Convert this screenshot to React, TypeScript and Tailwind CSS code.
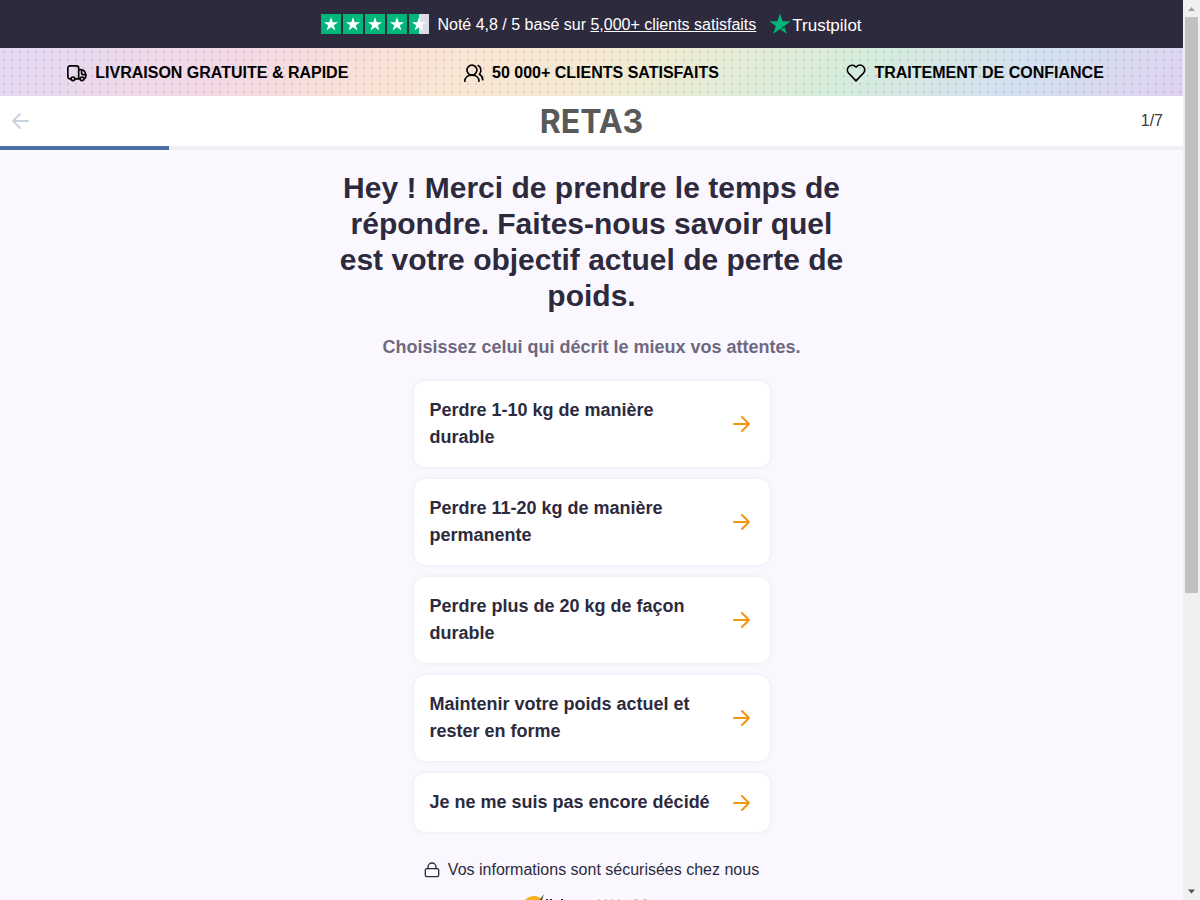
import React from 'react';

const STAR = 'M12 1.5l2.6 7.7h8.1l-6.5 4.8 2.5 7.8L12 17l-6.7 4.8L7.8 14 1.3 9.2h8.1z';

const goals = [
  'Perdre 1-10 kg de manière durable',
  'Perdre 11-20 kg de manière permanente',
  'Perdre plus de 20 kg de façon durable',
  'Maintenir votre poids actuel et rester en forme',
  'Je ne me suis pas encore décidé',
];

function RatingStar({ half = false }: { half?: boolean }) {
  return (
    <span className={half ? 'flex size-5 items-center justify-center bg-linear-to-r from-[#00b67a] from-50% to-[#dcdce6] to-50%' : 'flex size-5 items-center justify-center bg-[#00b67a]'}>
      <svg viewBox="0 0 24 24" className="size-4 fill-white" aria-hidden="true">
        <path d={STAR} />
      </svg>
    </span>
  );
}

function LineIcon({ className, children }: { className: string; children: React.ReactNode }) {
  return (
    <svg viewBox="0 0 24 24" className={className} fill="none" stroke="currentColor" strokeWidth="2" strokeLinecap="round" strokeLinejoin="round" aria-hidden="true">
      {children}
    </svg>
  );
}

function TopBar() {
  return (
    <div className="flex h-12 items-center justify-center bg-[#2d2a3e] text-base text-white">
      <div className="mr-2 flex gap-0.5" role="img" aria-label="4,8 / 5">
        <RatingStar />
        <RatingStar />
        <RatingStar />
        <RatingStar />
        <RatingStar half />
      </div>
      <p className="pt-0.5">
        Noté 4,8 / 5 basé sur <a href="#avis" className="underline">5,000+ clients satisfaits</a>
      </p>
      <a href="#trustpilot" className="ml-3 flex items-center">
        <svg viewBox="0 0 24 24" className="size-6" aria-hidden="true">
          <path d={STAR} fill="#00b67a" />
          <path d="M16.8 16l-.6-2L12 17z" fill="#005128" />
        </svg>
        <span className="pt-1 text-[17px] leading-6">Trustpilot</span>
      </a>
    </div>
  );
}

function Benefits() {
  return (
    <div className="bg-[linear-gradient(135deg,#e4d9f5_0%,#f3d8e4_20%,#fae3d5_34%,#f5ead1_50%,#d6edda_70%,#d2e0f1_86%,#e0d2ef_100%)]">
      <ul className="grid h-12 grid-cols-3 items-center bg-[radial-gradient(circle,rgba(60,50,90,0.15)_1px,transparent_1.5px)] bg-size-[8px_8px] px-4 pt-0.5 text-base font-bold text-black">
        <li className="flex items-center justify-center gap-2">
          <LineIcon className="size-5">
            <path d="M4 19a2.500 2.500 0 0 1-3-2.500V6a2.500 2.500 0 0 1 2.500-2.500h8A2.500 2.500 0 0 1 14 6v13H9.500M14 8h2.500a6 6 0 0 1 6 6v2.500a2.500 2.500 0 0 1-2 2.500M14 19h1.500" />
            <circle cx="7.200" cy="19" r="2.200" />
            <circle cx="18" cy="19" r="2.200" />
            <path d="M17.500 9v3a2 2 0 0 0 2 2h3" />
          </LineIcon>
          LIVRAISON GRATUITE &amp; RAPIDE
        </li>
        <li className="flex items-center justify-center gap-2">
          <LineIcon className="size-5">
            <circle cx="9.500" cy="8.500" r="6" />
            <path d="M1 22c0-4.500 3.500-7.500 8.500-7.500s8.500 3 8.500 7.500M17 3c3.500 1.500 4.500 7 1.500 10.500 2.500 1.500 4 3.500 4 6.500" />
          </LineIcon>
          50 000+ CLIENTS SATISFAITS
        </li>
        <li className="flex items-center justify-center gap-2">
          <LineIcon className="size-5">
            <path d="M20.800 4.200a5.700 5.700 0 0 0-8 0L12 5l-.8-.8a5.700 5.700 0 0 0-8 8.100L12 21.500l8.800-9.200a5.700 5.700 0 0 0 0-8.100z" />
          </LineIcon>
          TRAITEMENT DE CONFIANCE
        </li>
      </ul>
    </div>
  );
}

function StepHeader() {
  return (
    <header>
      <div className="grid h-[50px] grid-cols-3 items-center bg-white px-2">
        <button type="button" aria-label="Retour" className="justify-self-start text-[#c9d3df]">
          <LineIcon className="size-6">
            <path d="M20 12H5M12 19l-7-7 7-7" />
          </LineIcon>
        </button>
        <span className="justify-self-center pt-0.5 font-['Inter',sans-serif] text-[32px] leading-9 font-bold text-[#595959]">RETA3</span>
        <span className="justify-self-end pr-3 text-base text-[#3a3a48]">1/7</span>
      </div>
      <div className="h-1 bg-[#edf0f5]">
        <div className="h-1 w-1/7 bg-[#4a6fa5]" />
      </div>
    </header>
  );
}

function GoalOption({ label }: { label: string }) {
  return (
    <button type="button" className="flex w-full items-center justify-between rounded-xl bg-white py-4 pr-[17px] pl-4 text-left text-lg leading-[27px] font-bold text-[#2d2a3e] shadow-[0_0_4px_rgba(45,42,62,0.08)]">
      <span className="max-w-[284px]">{label}</span>
      <LineIcon className="size-6 shrink-0 text-[#f0960f]">
        <path d="M5 12h15M13 19l7-7-7-7" />
      </LineIcon>
    </button>
  );
}

function ScrollRail() {
  return (
    <div className="flex w-[17px] shrink-0 flex-col items-center bg-[#f0f0f0]" aria-hidden="true">
      <svg viewBox="0 0 17 17" className="size-[17px] shrink-0"><path d="M5 11l3.500-4 3.500 4z" fill="#a0a0a0" /></svg>
      <div className="h-[64%] w-[13px] bg-[#c1c1c1]" />
      <svg viewBox="0 0 17 17" className="mt-auto size-[17px] shrink-0"><path d="M5 6.500l3.500 4 3.500-4z" fill="#505050" /></svg>
    </div>
  );
}

export default function App() {
  return (
    <div className="flex h-screen overflow-hidden bg-[#faf8fe] font-['Liberation_Sans',Arial,sans-serif]">
      <div className="min-w-0 grow overflow-hidden">
        <TopBar />
        <Benefits />
        <StepHeader />
        <main className="flex flex-col items-center px-4 pt-5">
          <h1 className="max-w-[512px] text-center text-3xl leading-9 font-bold text-[#2d2a3e]">
            Hey ! Merci de prendre le temps de répondre. Faites-nous savoir quel est votre objectif actuel de perte de poids.
          </h1>
          <p className="mt-5 text-center text-lg leading-[27px] font-bold text-[#6f6781]">Choisissez celui qui décrit le mieux vos attentes.</p>
          <div className="mt-5 flex w-full max-w-[356px] flex-col gap-3">
            {goals.map((goal) => (
              <GoalOption key={goal} label={goal} />
            ))}
          </div>
          <p className="mt-[26px] flex items-center gap-2 text-base text-[#2d2a3e]">
            <LineIcon className="size-4">
              <rect x="2" y="10" width="20" height="12" rx="2" />
              <path d="M6 10V7.500a6 6 0 0 1 12 0V10" />
            </LineIcon>
            Vos informations sont sécurisées chez nous
          </p>
          <svg viewBox="0 0 136 36" className="mt-3 h-9 w-[136px]" aria-hidden="true">
            <circle cx="10" cy="14" r="12" fill="#f6b21b" />
            <path d="M8 16L20 0l-2 6-6 12z" fill="#4a4a45" />
            <path d="M22 5h2v16h-2zM26 5h2v16h-2zM37 5h2v16h-2z" fill="#2d2a3e" />
            <path d="M74 5h2v12h-2zM81 5h2v12h-2zM87 5h2v12h-2zM94 5h2v12h-2zM110 5h4v12h-4zM119 5h4v12h-4z" fill="#f2b8be" />
          </svg>
        </main>
      </div>
      <ScrollRail />
    </div>
  );
}
